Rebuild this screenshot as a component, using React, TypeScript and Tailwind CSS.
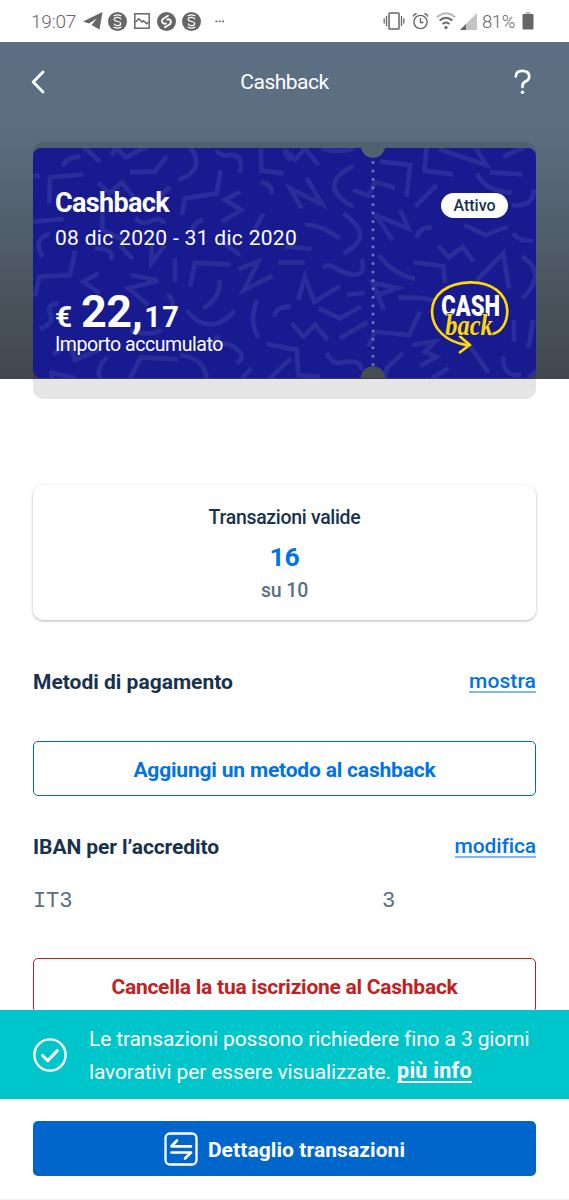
import React from "react";

type TProps = { className?: string; children: React.ReactNode };
const T = ({ className = "", children }: TProps) => (
  <span className={"whitespace-nowrap " + className}>{children}</span>
);

const LEFT = [
  "M190 50L240 95", "M290 52L275 76", "M290 55L318 82L380 50", "M130 110Q135 82 180 80", "M330 127L405 125L440 78",
  "M510 50Q560 120 475 150", "M590 60Q600 80 630 75Q672 72 660 128", "M722 55L725 122L790 130", "M790 60L812 92",
  "M88 220L90 142L190 134", "M40 138H60", "M235 158L268 190L305 158L345 205", "M247 245L247 300L310 330",
  "M485 255L495 205L590 190L602 120", "M660 185L615 210L665 240L605 275", "M722 158Q758 160 755 192",
  "M395 225L450 170", "M40 275L130 267", "M68 380Q35 330 90 310", "M345 262Q365 288 395 272Q425 258 432 282",
  "M520 300Q515 280 550 270", "M730 250L700 305", "M300 345L338 387", "M395 340L394 400L435 345", "M600 330L660 375",
  "M225 355Q285 355 272 390", "M45 500L58 440L150 435L165 362", "M235 430L190 455L240 490",
  "M333 435L415 452L325 475L385 525", "M465 385V455", "M510 470L525 398L632 404", "M655 418L715 395L672 480L758 437",
  "M775 398H812", "M598 450Q605 500 550 535", "M500 542Q570 625 645 542", "M712 510Q685 570 715 622",
  "M765 560Q765 530 812 530", "M440 495Q460 500 458 530", "M115 520Q80 520 90 550Q105 580 60 597",
  "M740 642L812 655", "M330 600Q380 620 425 602", "M572 655Q600 628 640 650Q685 680 650 700", "M330 745L362 682L475 688",
  "M100 672L150 640L165 690L235 660", "M262 682Q225 715 240 745", "M480 675Q555 685 560 745", "M665 745L695 715",
  "M750 745L812 685", "M95 745V728L165 745", "M595 615L570 655",
];
const RIGHT = [
  "M0 60L30 90L60 55L100 105", "M110 55Q160 72 205 55", "M425 50L418 122L505 133", "M285 95L375 105L365 200",
  "M205 108Q90 165 205 230", "M205 180L250 197L270 155L330 173", "M50 235L15 175L110 222L65 143", "M390 230L455 165",
  "M462 58L605 106L570 50", "M655 80L722 50", "M615 127L712 133", "M575 130Q600 185 680 188",
  "M748 180Q740 235 680 225", "M0 350L80 357", "M60 283Q110 285 165 325", "M175 250Q275 320 175 370",
  "M322 330L272 255L370 295L345 238", "M395 325Q400 290 440 293", "M538 285L602 315L668 290",
  "M685 310Q700 335 745 332", "M460 348L492 382L533 350L565 395", "M575 450L655 370L672 475",
  "M712 380Q790 430 712 505", "M385 397L475 408L480 460", "M0 398H58", "M115 415Q125 395 160 420Q250 460 230 385",
  "M282 375Q320 430 390 447", "M40 510L60 440L88 515L165 468", "M185 497Q205 488 238 490", "M297 540L262 458L335 475L270 498",
  "M340 502Q430 502 445 512", "M100 535L165 565L228 530", "M20 580L55 620L90 585L128 630", "M165 625L248 575",
  "M405 545L372 615L270 605L250 650", "M380 645L450 635L420 665L455 680L405 708", "M530 640L550 640L610 728",
  "M687 570V635", "M745 570L730 655", "M0 655L35 658L40 735L105 740", "M125 670Q145 710 180 695Q230 690 230 720",
  "M355 668L305 715L300 745", "M440 745L490 715", "M655 680Q650 740 710 735", "M730 742L755 722",
];

const Voucher = () => (
  <svg className="absolute inset-0" width="503" height="230" viewBox="0 0 503 230" fill="none">
    <g stroke="#292d99" strokeWidth="14">
      <g transform="translate(-13 -18) scale(.33333)">{LEFT.map((d) => <path key={d} d={d} />)}</g>
      <g transform="translate(252 -18) scale(.33333)">{RIGHT.map((d) => <path key={d} d={d} />)}</g>
    </g>
    <path d="M340 14.5V222" stroke="#7476bd" strokeWidth="3" strokeLinecap="round" strokeDasharray="0 8.42" />
    <circle cx="340" cy="-2.3" r="12.2" fill="#52616f" />
    <circle cx="340" cy="230.5" r="12.2" fill="#474d54" />
  </svg>
);

const CashbackLogo = () => (
  <svg className="overflow-visible" width="100" height="90" viewBox="0 0 300 270" fill="none">
    <path d="M208 193C245 192 262 155 262 122C260 70 215 36 150 37C82 39 37 72 36 125C37 175 75 215 143 226" stroke="#ffd900" strokeWidth="8" strokeLinecap="round" />
    <path d="M118 197L149 225L117 249" stroke="#ffd900" strokeWidth="8" />
    <text x="64" y="137" textLength="176" lengthAdjust="spacingAndGlyphs" className="font-[Roboto,sans-serif] font-black" fontSize="89" fill="#fff">CASH</text>
    <text x="76" y="194" textLength="142" lengthAdjust="spacingAndGlyphs" className="font-['Liberation_Serif',serif] font-bold italic" fontSize="88" fill="#ffd900" stroke="#181b8f" strokeWidth="4" paintOrder="stroke">back</text>
  </svg>
);

const Coin = ({ bold = false }: { bold?: boolean }) => (
  <svg width="19" height="19" viewBox="0 0 19 19" fill="none">
    <circle cx="9.5" cy="9.5" r="9.5" fill="#666" />
    {bold ? (
      <path d="M11 3.8L6.2 6.8Q3.8 9 6.2 11.2Q7.4 12.200 8.800 11.400M8 15.2L12.8 12.2Q15.2 10 12.8 7.8Q11.600 6.800 10.200 7.600" stroke="#fff" strokeWidth="1.9" strokeLinecap="round" />
    ) : (
      <g stroke="#fff" strokeWidth="1.2" strokeLinecap="round">
        <path d="M12.8 7Q12 5.3 9.5 5.3Q6.3 5.3 6.3 7.3Q6.3 9 9.5 9.5Q12.7 10 12.7 11.7Q12.7 13.7 9.5 13.7Q7 13.7 6.2 12" />
        <path d="M6 3.8Q9.5 2 13 3.8M6 15.2Q9.5 17 13 15.2" />
      </g>
    )}
  </svg>
);

const StatusBar = () => (
  <div className="flex h-[42px] shrink-0 items-center bg-white pl-[31px] pr-[35px] text-[#666]">
    <T className="pt-[2px] text-[19px] font-light leading-[42px] tracking-[-0.2px]">19:07</T>
    <svg className="ml-[7px]" width="20" height="18" viewBox="0 0 20 18" fill="#666">
      <path d="M0 9.5L19.5 0L16.5 17.5L8.5 13L14 6.5L6 11.5Z" />
    </svg>
    <div className="ml-[5px] flex items-center gap-[7px]">
      <Coin />
      <svg width="16" height="16" viewBox="0 0 16 16" fill="none" stroke="#666" strokeWidth="1.5">
        <rect x=".8" y=".8" width="14.4" height="14.4" />
        <path d="M1.5 9L4.8 5.8L8 9L9.6 7.8L12.5 10.8L14.5 9" />
      </svg>
      <Coin bold />
      <span className="-ml-px"><Coin /></span>
    </div>
    <svg className="ml-[14px]" width="10" height="3" viewBox="0 0 10 3" fill="#666">
      <path d="M.5.5h1.8v1.8H.5zM3.8 .5h1.8v1.8H3.8zM7.1 .5h1.8v1.8H7.1z" />
    </svg>
    <svg className="ml-auto" width="22" height="18" viewBox="0 0 22 18" fill="none" stroke="#666" strokeWidth="1.3">
      <rect x="6" y="1" width="10" height="16" rx=".8" strokeWidth="1.5" />
      <path d="M3.5 4V14M1.2 6.5V11.5M18.5 4V14M20.8 6.5V11.5" />
    </svg>
    <svg className="ml-[7px]" width="17" height="18" viewBox="0 0 17 18" fill="none" stroke="#666" strokeWidth="1.4">
      <circle cx="8.5" cy="10" r="6.6" />
      <path d="M8.5 6V10.5H11.5M1 4.5Q2 2.3 4.6 1.5M16 4.5Q15 2.3 12.4 1.5" />
    </svg>
    <svg className="ml-[7px]" width="20" height="18" viewBox="0 0 20 18" fill="none" strokeWidth="2">
      <path d="M.8 5.2Q10 -2.8 19.2 5.2" stroke="#bbb" />
      <path d="M3.6 8.6Q10 3 16.4 8.6M6.6 12Q10 9 13.4 12" stroke="#666" />
      <circle cx="10" cy="15.5" r="1.6" fill="#666" />
    </svg>
    <svg className="ml-[4px]" width="17" height="17" viewBox="0 0 17 17">
      <path d="M0 17L17 0V17Z" fill="#c4c4c4" />
      <path d="M0 17L6 11V17Z" fill="#666" />
    </svg>
    <T className="ml-[5px] pt-[2px] text-[18.5px] font-light leading-[42px] tracking-[-0.4px]">81%</T>
    <svg className="ml-[7px]" width="12" height="18" viewBox="0 0 12 18">
      <path d="M3.5 0H8.5V2H3.5Z" fill="#bbb" />
      <rect x=".5" y="2" width="11" height="15.5" rx="1" fill="#666" />
    </svg>
  </div>
);

const Hero = () => (
  <section className="h-[337px] shrink-0 bg-linear-to-b from-[#5c6f82] from-[24%] to-[#42474d]">
    <header className="grid h-[80px] grid-cols-[1fr_auto_1fr] items-center pl-[31px] pr-[38px] text-white">
      <svg className="-mt-[3px]" width="15" height="24" viewBox="0 0 15 24" fill="none" stroke="#fff" strokeWidth="2.8" strokeLinecap="round" strokeLinejoin="round">
        <path d="M12 2L2.2 12L12 22" />
      </svg>
      <h1 className="pl-[7px] leading-[80px]"><T className="text-[21px] tracking-[-0.5px]">Cashback</T></h1>
      <svg className="-mt-[2px] justify-self-end" width="17" height="26" viewBox="0 0 17 26" fill="none">
        <path d="M1.8 7.5Q1.8 1.8 8.3 1.8Q15.2 1.8 15.2 7.7Q15.2 10.6 11.8 12.3Q8.5 14 8.5 16.5V18" stroke="#fff" strokeWidth="2.7" strokeLinecap="round" />
        <circle cx="8.5" cy="23.3" r="1.8" fill="#fff" />
      </svg>
    </header>
    <div className="mx-[33px] mt-[20px] h-[257px] rounded-[10px] bg-black/10 pt-[6px]">
      <div className="relative flex h-[230px] justify-between overflow-hidden rounded-[8px] bg-[#181b8f] pl-[22px] text-white">
        <Voucher />
        <div className="relative flex flex-col items-start pt-[37px]">
          <T className="text-[27px] font-bold leading-[36px] tracking-[-0.65px]">Cashback</T>
          <T className="text-[21px] leading-[34px] tracking-[0.3px]">08 dic 2020 - 31 dic 2020</T>
          <div className="mt-[34px] flex h-[44px] items-baseline font-bold leading-[44px]">
            <T className="mr-[8px] w-[18px] text-[30px]">€</T>
            <T className="mr-[2px] text-[45px] leading-[46px] tracking-[-0.5px]">22,</T>
            <T className="text-[29px] tracking-[1.4px]">17</T>
          </div>
          <T className="text-[19.5px] leading-[24px] tracking-[-0.45px]">Importo accumulato</T>
        </div>
        <div className="relative flex flex-col items-end">
          <span className="mr-[28px] mt-[45px] flex h-[25px] w-[67px] items-center justify-center rounded-full bg-white text-[#17324d]">
            <T className="text-[16px] font-medium">Attivo</T>
          </span>
          <div className="mr-[16px] mt-[52px]"><CashbackLogo /></div>
        </div>
      </div>
    </div>
  </section>
);

const Content = () => (
  <section className="mx-[33px] mt-[106px] flex flex-col">
    <div className="flex h-[135px] flex-col items-center rounded-[10px] bg-white pt-[16px] text-[#17324d] shadow-[0_1px_3px_rgba(0,0,0,0.3)]">
      <T className="text-[19.5px] font-medium leading-[33px] tracking-[-0.32px]">Transazioni valide</T>
      <T className="mt-[5px] text-[26.5px] font-bold leading-[35px] tracking-[-0.3px] text-[#0073e6]">16</T>
      <T className="text-[19.5px] font-medium leading-[34px] tracking-[-0.15px] text-[#5c6f82]">su 10</T>
    </div>
    <div className="mt-[46px] flex h-[34px] items-center justify-between">
      <T className="text-[21px] font-bold text-[#17324d]">Metodi di pagamento</T>
      <a className="border-b-2 border-[#80b9f2] leading-[17px]"><T className="text-[21px] font-medium tracking-[0.1px] text-[#0073e6]">mostra</T></a>
    </div>
    <button className="mt-[41px] h-[55px] rounded-[5px] border-[1.5px] border-[#0066cc] pt-[4px]">
      <T className="text-[21px] font-bold tracking-[-0.19px] text-[#0073e6]">Aggiungi un metodo al cashback</T>
    </button>
    <div className="mt-[35px] flex h-[34px] items-center justify-between">
      <T className="text-[21px] font-bold tracking-[-0.08px] text-[#17324d]">IBAN per l’accredito</T>
      <a className="border-b-2 border-[#80b9f2] leading-[17px]"><T className="text-[21px] font-medium tracking-[-0.12px] text-[#0073e6]">modifica</T></a>
    </div>
    <div className="mt-[20px] flex h-[32px] items-center font-['Liberation_Mono',monospace] text-[22px] text-[#5c6f82]">
      <span className="w-[349px]"><T className="tracking-[-0.1px]">IT3</T></span>
      <T>3</T>
    </div>
    <button className="mt-[41px] h-[55px] rounded-[5px] border-[1.5px] border-[#c02222] pt-[4px]">
      <T className="text-[21px] font-bold tracking-[-0.25px] text-[#c02222]">Cancella la tua iscrizione al Cashback</T>
    </button>
  </section>
);

const Toast = () => (
  <div className="flex h-[89px] shrink-0 items-center bg-[#00c5ca] pl-[32px] text-white">
    <svg width="36" height="36" viewBox="0 0 36 36" fill="none" stroke="#fff" strokeWidth="2.4">
      <circle cx="18" cy="18" r="15.6" />
      <path d="M10.5 18.5L15.8 23.6L25.3 13.6" strokeWidth="3" strokeLinecap="round" strokeLinejoin="round" />
    </svg>
    <p className="ml-[21px] flex flex-col pt-[2px] text-[21px] leading-[33px]">
      <T className="tracking-[-0.13px]">Le transazioni possono richiedere fino a 3 giorni</T>
      <span className="flex items-center">
        <T className="tracking-[-0.13px]">lavorativi per essere visualizzate.</T>
        <a className="ml-[6px] border-b-2 border-white leading-[19px]"><T className="text-[21.5px] font-bold tracking-[0.28px]">più info</T></a>
      </span>
    </p>
  </div>
);

const Footer = () => (
  <footer className="flex h-[101px] shrink-0 flex-col border-b border-[#f1f1f1] bg-white px-[33px] pt-[22px]">
    <button className="flex h-[55px] items-center justify-center rounded-[5px] bg-[#0066cc] text-white">
      <svg width="34" height="34" viewBox="0 0 34 34" fill="none" stroke="#fff" strokeWidth="2.7" strokeLinecap="round" strokeLinejoin="round">
        <rect x="1.5" y="1.5" width="31" height="31" rx="4.5" strokeWidth="2.3" />
        <path d="M27 14.3H7.5L13 8.5M7.5 20.5H27L21 26.5" />
      </svg>
      <span className="ml-[10px] mt-[5px]"><T className="text-[21px] font-bold tracking-[0.08px]">Dettaglio transazioni</T></span>
    </button>
  </footer>
);

export default function App() {
  return (
    <div className="flex h-[1200px] w-[569px] flex-col overflow-hidden bg-white font-[Roboto,sans-serif]">
      <StatusBar />
      <main className="flex min-h-0 flex-1 flex-col overflow-hidden">
        <Hero />
        <Content />
      </main>
      <Toast />
      <Footer />
    </div>
  );
}
